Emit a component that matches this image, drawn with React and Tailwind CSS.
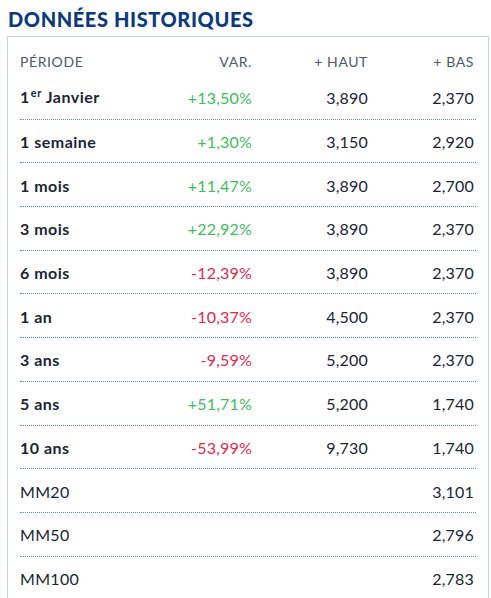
const rows = [
  { label: "1", sup: "er", rest: " Janvier", bold: true, v: "+13,50%", up: true, h: "3,890", b: "2,370" },
  { label: "1 semaine", bold: true, v: "+1,30%", up: true, h: "3,150", b: "2,920" },
  { label: "1 mois", bold: true, v: "+11,47%", up: true, h: "3,890", b: "2,700" },
  { label: "3 mois", bold: true, v: "+22,92%", up: true, h: "3,890", b: "2,370" },
  { label: "6 mois", bold: true, v: "-12,39%", up: false, h: "3,890", b: "2,370" },
  { label: "1 an", bold: true, v: "-10,37%", up: false, h: "4,500", b: "2,370" },
  { label: "3 ans", bold: true, v: "-9,59%", up: false, h: "5,200", b: "2,370" },
  { label: "5 ans", bold: true, v: "+51,71%", up: true, h: "5,200", b: "1,740" },
  { label: "10 ans", bold: true, v: "-53,99%", up: false, h: "9,730", b: "1,740" },
  { label: "MM20", b: "3,101" },
  { label: "MM50", b: "2,796" },
  { label: "MM100", b: "2,783" },
];

export default function App() {
  return (
    <div className="w-[491px] h-[598px] overflow-hidden bg-white font-['Lato',sans-serif] text-[#1b2535]">
      <h2 className="pl-[8px] pt-[7px] h-[36px] text-[20px] leading-[24px] font-black tracking-[0.6px] text-[#0c3a7f]">
        DONNÉES HISTORIQUES
      </h2>
      <div className="ml-[7px] w-[482px] border border-[#c6d3e0] px-[12px] pb-4">
        <div className="grid grid-cols-[132px_100px_116px_106px] pt-[15px] h-[39px] text-[14px] leading-[20px] text-[#4e5866] tracking-[0.6px]">
          <div>PÉRIODE</div>
          <div className="text-right">VAR.</div>
          <div className="text-right">+ HAUT</div>
          <div className="text-right">+ BAS</div>
        </div>
        {rows.map((r, i) => (
          <div
            key={i}
            className="grid grid-cols-[132px_100px_116px_106px] items-center h-[43.7px] pt-[2px] border-b border-dotted border-[#7089a6] text-[16px] leading-[20px]"
          >
            <div className={r.bold ? "font-bold tracking-[0.5px]" : "tracking-[0.3px]"}>
              {r.label}
              {r.sup && <span className="text-[11px] relative -top-[6px] ml-[1px]">{r.sup}</span>}
              {r.rest}
            </div>
            <div className={"text-right tracking-[0.2px] " + (r.up ? "text-[#3dbd5c]" : "text-[#e8274b]")}>{r.v}</div>
            <div className="text-right tracking-[0.2px]">{r.h}</div>
            <div className="text-right tracking-[0.2px]">{r.b}</div>
          </div>
        ))}
      </div>
    </div>
  );
}
